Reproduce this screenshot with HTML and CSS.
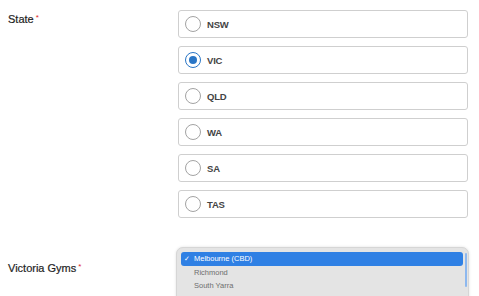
FILE: index.html
```html
<!DOCTYPE html>
<html>
<head>
<meta charset="utf-8">
<link rel="stylesheet" href="styles.css">
</head>
<body>
<form class="form">
  <div class="row">
    <div class="label">State<span class="req">*</span></div>
    <div class="radios">
      <label class="radio"><span class="dot"></span><span class="txt">NSW</span></label>
      <label class="radio"><span class="dot on"></span><span class="txt">VIC</span></label>
      <label class="radio"><span class="dot"></span><span class="txt">QLD</span></label>
      <label class="radio"><span class="dot"></span><span class="txt">WA</span></label>
      <label class="radio"><span class="dot"></span><span class="txt">SA</span></label>
      <label class="radio"><span class="dot"></span><span class="txt">TAS</span></label>
    </div>
  </div>
  <div class="row row-gyms">
    <div class="label label-gyms">Victoria Gyms<span class="req">*</span></div>
    <div class="listbox">
      <div class="opt sel"><span class="check">✓</span>Melbourne (CBD)</div>
      <div class="opt">Richmond</div>
      <div class="opt">South Yarra</div>
      <div class="scroll"></div>
    </div>
  </div>
</form>
</body>
</html>
```
FILE: styles.css
```css
html, body {
  margin: 0;
  padding: 0;
  background: #ffffff;
  overflow: hidden;
}
body {
  width: 479px;
  height: 296px;
  font-family: "Liberation Sans", Arial, Helvetica, sans-serif;
  color: #222;
}
.form {
  padding-top: 10px;
}
.row {
  display: grid;
  grid-template-columns: 178px 290px;
}
.label {
  padding-left: 8px;
  padding-top: 1px;
  font-size: 11px;
  line-height: 13px;
  color: #1e1e1e;
  -webkit-text-stroke: 0.2px #1e1e1e;
}
.req {
  color: #e0262b;
  font-size: 8px;
  margin-left: 2px;
  vertical-align: 3px;
  -webkit-text-stroke: 0;
}
.radios {
  display: flex;
  flex-direction: column;
  gap: 8px;
}
.radio {
  box-sizing: border-box;
  height: 28px;
  border: 1px solid #cfcfcf;
  border-radius: 3px;
  display: flex;
  align-items: center;
  padding-left: 6px;
  gap: 6px;
}
.dot {
  box-sizing: border-box;
  width: 16px;
  height: 16px;
  border-radius: 50%;
  border: 1.5px solid #a3a3a3;
  display: flex;
  align-items: center;
  justify-content: center;
}
.dot.on {
  border-color: #2a76c6;
}
.dot.on::after {
  content: "";
  width: 8px;
  height: 8px;
  border-radius: 50%;
  background: #2a76c6;
}
.txt {
  font-size: 9.5px;
  font-weight: bold;
  color: #444;
  letter-spacing: -0.2px;
}
.row-gyms {
  margin-top: 29px;
  grid-template-columns: 176px 293px;
}
.label-gyms {
  padding-top: 13px;
}
.listbox {
  position: relative;
  box-sizing: border-box;
  height: 58px;
  background: #e4e4e4;
  border: 1px solid #d6d6d6;
  border-radius: 7px;
  box-shadow: 0 0 3px rgba(0,0,0,0.12);
  padding: 4px 5px 0 4px;
}
.opt {
  height: 13.5px;
  line-height: 13.5px;
  font-size: 7.5px;
  color: #6e6e6e;
  padding-left: 13px;
}
.opt.sel {
  background: #2f80e4;
  color: #ffffff;
  border-radius: 3px;
  padding-left: 3px;
}
.check {
  display: inline-block;
  width: 10px;
  font-size: 7px;
}
.scroll {
  position: absolute;
  right: 1px;
  top: 5px;
  width: 2px;
  height: 34px;
  background: #8db8ef;
  border-radius: 1px;
}
```
